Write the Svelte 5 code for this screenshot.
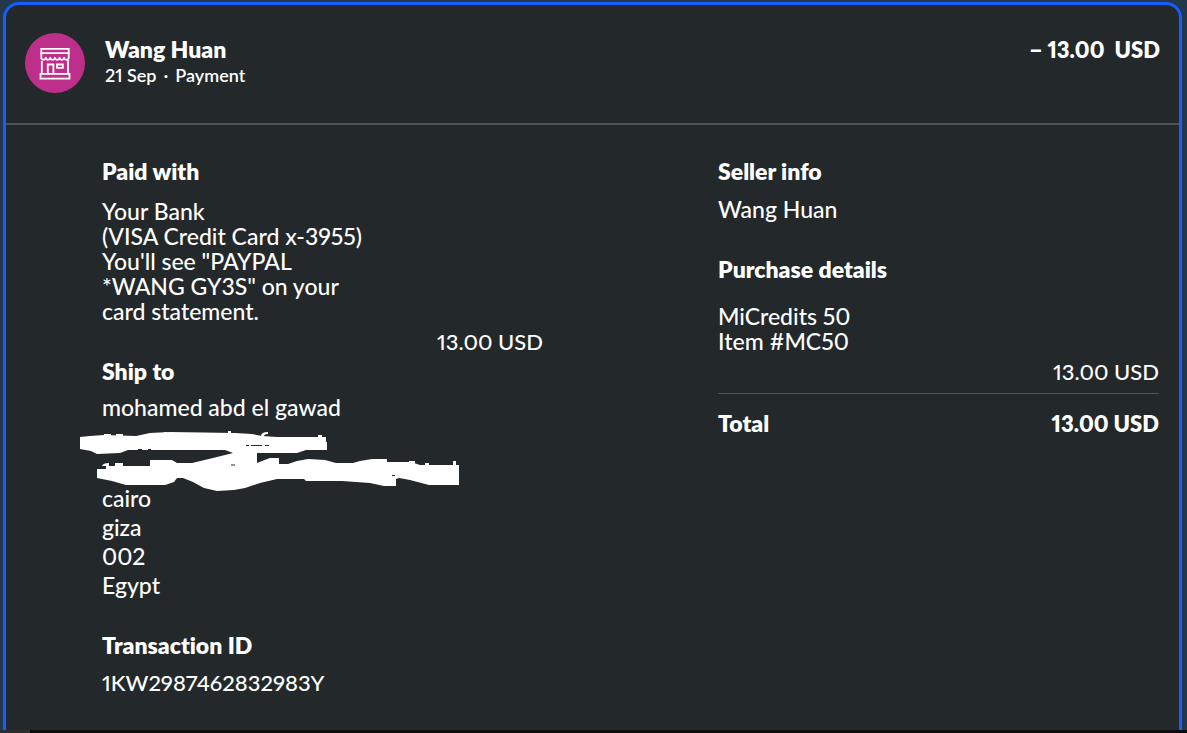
<script>
  const address = ['cairo', 'giza', '002', 'Egypt'];
</script>

<main class="page">
  <article class="card">
    <header class="top">
      <span class="avatar">
        <svg viewBox="0 0 60 60" aria-hidden="true">
          <g fill="none" stroke="#fff" stroke-width="1.8">
            <path d="M16.3 15.8h27.4v4.4h-27.4zM15.5 40.8h29v4.8h-29zM16.8 28v13M43 27v14M22.8 41v-9.5h5.6V41M32 31.5h5.8v3.3H32z" />
            <path d="M16.3 20v5.2q2 3.4 4.5 0q1.9 3.2 4.5 0q2.2 3.2 4.6 0q2.4 3.2 4.6 0q2.4 3.2 4.6 0q2.5 3.4 4.6 0V20M20.8 25.6v-1.600M25.3 25.6v-1.600M29.9 25.6v-1.600M34.5 25.6v-1.600M39.1 25.6v-1.600" />
          </g>
        </svg>
      </span>
      <div class="who">
        <h1>Wang Huan</h1>
        <p><span>21 Sep</span><span>·</span><span>Payment</span></p>
      </div>
      <strong class="amount">− 13.00&nbsp; USD</strong>
    </header>

    <div class="details">
      <div class="left">
        <section class="paid">
          <h2>Paid with</h2>
          <p>Your Bank<br />(VISA Credit Card x-3955)<br />You'll see "PAYPAL<br />*WANG GY3S" on your<br />card statement.</p>
          <p class="sum">13.00 USD</p>
        </section>
        <section class="ship">
          <h2>Ship to</h2>
          <address>
            <span>mohamed abd el gawad</span>
            <div class="hidden-lines">
              <svg class="scribble" viewBox="80 425 380 70" aria-hidden="true">
                <g fill="#fff">
                  <path d="M80 437L90 436L104 435L136 436L150 433L170 432L235 433L252 434L262 436L277 437H326V442H327V450H306L297 453H257V463L262 461L270 458H279V464H288L297 461L308 459L325 460L336 463H353L360 461L372 459H387V462H411L420 465H459V485H429L410 480L399 478L396 479V486H384L370 483L342 481H306L304 479H277L260 483L245 488L234 490L217 491L204 488L193 482L183 478H177L174 482L165 485H126L112 481L97 478V469H106V466H150V460H172L177 463H192L213 458L233 453L225 450H128L120 453L97 454L91 451L80 449Z" />
                  <path d="M104 434h7v2h-7zM116 434h7v2h-7zM164 432h3v2h-3zM228 431h3v3h-3zM318 435h4v3h-4zM261 436q0-4 7-4v2q-4 0-4 2zM102 466q1-3 7-3v3zM115 463h8v3h-8zM425 463h4v3h-4zM453 461h3v5h-3zM409 461h6v2h-6z" />
                </g>
                <path d="M246 445.500h3M251 445.500h11M265 445.500h4M231 465h4M392 475.500h3M138 449.500h4M148 449.500h3" stroke="#23282b" />
              </svg>
            </div>
            {#each address as line}<span>{line}</span>{/each}
          </address>
        </section>
        <section class="transaction">
          <h2>Transaction ID</h2>
          <p>1KW2987462832983Y</p>
        </section>
      </div>

      <div class="right">
        <section class="seller">
          <h2>Seller info</h2>
          <p>Wang Huan</p>
        </section>
        <section>
          <h2>Purchase details</h2>
          <p class="item">MiCredits 50<br />Item #MC50</p>
          <p class="sum">13.00 USD</p>
          <div class="total"><strong>Total</strong><strong>13.00 USD</strong></div>
        </section>
      </div>
    </div>
  </article>
  <footer class="scroll"><span></span></footer>
</main>

<style>
  :global(body) { margin: 0; background: #23384b; }
  .page {
    min-height: 100vh;
    box-sizing: border-box;
    display: flex;
    flex-direction: column;
    padding-top: 2px;
    color: #fff;
    font: 500 23px/25px Lato, "Noto Sans", sans-serif;
    font-variant-ligatures: none;
    font-variant-numeric: proportional-nums;
  }
  h1, h2, p { margin: 0; }
  h1, h2, strong { font-size: 23px; line-height: 25px; font-weight: 800; }
  .card {
    flex: 1;
    margin: 0 5px 0 3px;
    border: 3px solid #1a5cff;
    border-bottom: 0;
    border-radius: 16px 16px 0 0;
    background: #23282b;
  }
  .top {
    display: flex;
    align-items: flex-start;
    padding: 28px 19px 30px;
    border-bottom: 2px solid #515456;
  }
  .avatar { flex: none; width: 60px; height: 60px; border-radius: 50%; background: #bd2f8b; }
  .avatar svg { display: block; }
  .who { flex: 1; margin-left: 20px; padding-top: 4px; }
  .who p { display: flex; gap: 7px; margin-top: 1px; font-size: 18px; font-weight: 600; }
  .amount { padding-top: 4px; font-size: 22px; }
  .details {
    display: grid;
    grid-template-columns: 441px 441px;
    justify-content: space-between;
    padding: 34px 20px 20px 96px;
  }
  .sum, .total strong + strong, .transaction p { font-size: 22px; }
  .sum { text-align: right; }
  .paid p:not(.sum) { margin-top: 15px; }
  .paid .sum { margin-top: 5px; }
  .ship { margin: 5px 0 33px; }
  .ship address { margin-top: 9px; font-style: normal; line-height: 29px; display: flex; flex-direction: column; }
  .hidden-lines { position: relative; height: 62px; }
  .scribble { position: absolute; left: -22px; top: 3px; width: 380px; height: 70px; }
  section > h2 + p { margin-top: 12px; }
  .seller p { line-height: 27px; }
  .seller { margin-bottom: 34px; }
  h2 + .item { margin-top: 22px; }
  .item + .sum { margin-top: 5px; }
  .total { display: flex; justify-content: space-between; margin-top: 9px; padding-top: 17px; border-top: 1px solid #515456; }
  .scroll { height: 3px; background: #0d0c0d; }
  .scroll span { display: block; width: 30px; height: 3px; background: #2e2d2e; }
</style>
